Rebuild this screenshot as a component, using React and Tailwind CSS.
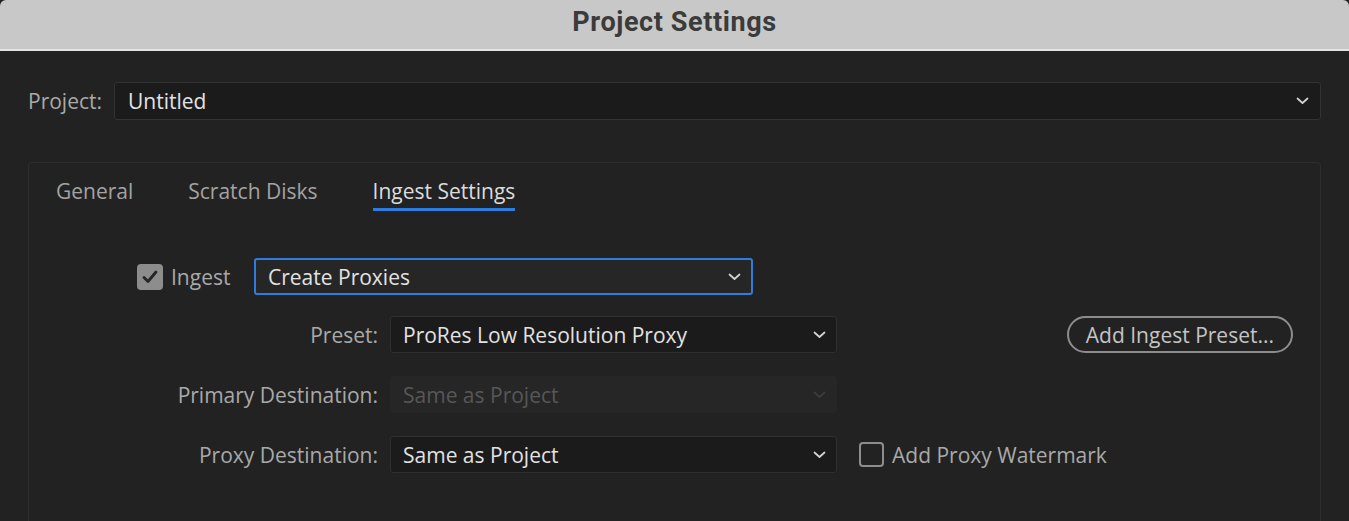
import { useState } from 'react'

function Chevron({ className = '' }) {
  return (
    <svg width="13" height="8" viewBox="0 0 13 8" className={className} fill="none">
      <path d="M1.5 1.5 L6.5 6 L11.5 1.5" stroke="currentColor" strokeWidth="1.7" strokeLinecap="round" strokeLinejoin="round" />
    </svg>
  )
}

function Select({ value, width, focused, disabled }) {
  const box = focused
    ? 'bg-[#262626] border-2 border-[#2d7de0]'
    : disabled
      ? 'bg-[#262626] border border-[#262626]'
      : 'bg-[#1b1b1b] border border-[#2f2f2f]'
  return (
    <div className={`${width} h-[37px] flex items-center justify-between rounded-[3px] pl-3 pr-[10px] ${box}`}>
      <span className={disabled ? 'text-[#575757]' : 'text-[#e2e2e2]'}>{value}</span>
      <Chevron className={disabled ? 'text-[#3c3c3c]' : 'text-[#d4d4d4]'} />
    </div>
  )
}

function Checkbox({ checked }) {
  if (checked) {
    return (
      <div className="w-[26px] h-[26px] rounded-[4px] bg-[#8d8d8d] flex items-center justify-center">
        <svg width="18" height="16" viewBox="0 0 18 16" fill="none">
          <path d="M3 8.5 L7 12.5 L15 3" stroke="#262626" strokeWidth="2.8" strokeLinecap="round" strokeLinejoin="round" />
        </svg>
      </div>
    )
  }
  return <div className="w-[25px] h-[25px] rounded-[4px] border-2 border-[#8d8d8d]" />
}

function FieldRow({ label, children, className = '' }) {
  return (
    <div className={`flex items-center ${className}`}>
      <div className="w-[361px] pr-3 text-right text-[#a9a9a9]">{label}</div>
      {children}
    </div>
  )
}

export default function App() {
  const [tab, setTab] = useState('Ingest Settings')
  const tabs = ['General', 'Scratch Disks', 'Ingest Settings']

  return (
    <div className="w-[1349px] h-[521px] overflow-hidden bg-[#222222] text-[21px] leading-[28px] font-['Open_Sans',sans-serif]">
      {/* window title */}
      <div className="h-[51px] bg-[#c8c8c8] rounded-t-[6px] border-b-2 border-[#e4e4e4] flex justify-center pt-[6px]">
        <span className="font-['Roboto',sans-serif] font-bold text-[27px] leading-[32px] text-[#3b3b3b] tracking-[0.6px]">Project Settings</span>
      </div>

      <div className="px-[28px] pt-[31px]">
        <div className="flex items-center">
          <span className="w-[86px] text-[#a9a9a9]">Project:</span>
          <div className="flex-1 h-[38px] flex items-center justify-between bg-[#1b1b1b] border border-[#323232] rounded-[3px] pl-[13px] pr-[11px]">
            <span className="text-[#e2e2e2]">Untitled</span>
            <Chevron className="text-[#d4d4d4]" />
          </div>
        </div>

        <div className="mt-[42px] h-[400px] border border-[#2e2e2e] rounded-tl-[4px] rounded-tr-[4px]">
          <div className="flex pl-[27px] gap-[55px]">
            {tabs.map((t) => (
              <button
                key={t}
                onClick={() => setTab(t)}
                className={`pt-[14px] pb-[3px] border-b-[3px] ${t === tab ? 'border-[#2d7de0] text-[#dcdcdc]' : 'border-transparent text-[#a3a3a3]'}`}
              >
                {t}
              </button>
            ))}
          </div>

          <div className="mt-[47px] flex items-center pl-[108px]">
            <div className="w-[117px] flex items-center gap-2">
              <Checkbox checked />
              <span className="text-[#a9a9a9]">Ingest</span>
            </div>
            <Select value="Create Proxies" width="w-[499px]" focused />
          </div>

          <FieldRow label="Preset:" className="mt-[21px] pr-[27px]">
            <Select value="ProRes Low Resolution Proxy" width="w-[447px]" />
            <button className="ml-auto h-[37px] px-[17px] rounded-full border-2 border-[#8d8d8d] text-[#c4c4c4]">
              Add Ingest Preset...
            </button>
          </FieldRow>

          <FieldRow label="Primary Destination:" className="mt-[23px]">
            <Select value="Same as Project" width="w-[447px]" disabled />
          </FieldRow>

          <FieldRow label="Proxy Destination:" className="mt-[23px]">
            <Select value="Same as Project" width="w-[447px]" />
            <div className="ml-[22px] flex items-center gap-2">
              <Checkbox />
              <span className="text-[#a9a9a9]">Add Proxy Watermark</span>
            </div>
          </FieldRow>
        </div>
      </div>
    </div>
  )
}
